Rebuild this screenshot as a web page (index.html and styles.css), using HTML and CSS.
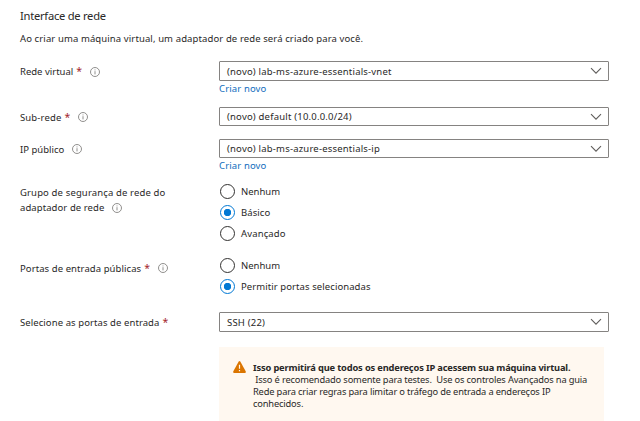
FILE: index.html
```html
<!DOCTYPE html>
<html lang="pt-BR">
<head>
<meta charset="utf-8">
<title>Interface de rede</title>
<link rel="stylesheet" href="styles.css">
</head>
<body>
<svg class="defs" aria-hidden="true">
  <symbol id="info" viewBox="0 0 10 10"><circle cx="5" cy="5" r="4.5" fill="none" stroke="#858381" stroke-width=".9"/><path d="M5 4.2V7.4M5 2.5V3.4" stroke="#858381" stroke-width=".9"/></symbol>
  <symbol id="chevron" viewBox="0 0 12 8"><path d="M1 1.2 6 6.2 11 1.2" fill="none" stroke="#605e5c" stroke-width="1.1"/></symbol>
</svg>
<main class="form">
  <h1 class="title">Interface de rede</h1>
  <p class="intro">Ao criar uma máquina virtual, um adaptador de rede será criado para você.</p>

  <div class="row row-vnet">
    <div class="label"><span>Rede virtual</span><b class="req">*</b><svg class="info"><use href="#info"/></svg></div>
    <div>
      <div class="select tall"><span>(novo) lab-ms-azure-essentials-vnet</span><svg class="chevron"><use href="#chevron"/></svg></div>
      <a class="link">Criar novo</a>
    </div>
  </div>

  <div class="row row-subnet">
    <div class="label"><span class="spaced">Sub-rede</span><b class="req">*</b><svg class="info"><use href="#info"/></svg></div>
    <div class="select"><span>(novo) default (10.0.0.0/24)</span><svg class="chevron"><use href="#chevron"/></svg></div>
  </div>

  <div class="row row-ip">
    <div class="label"><span>IP público</span><svg class="info"><use href="#info"/></svg></div>
    <div>
      <div class="select"><span>(novo) lab-ms-azure-essentials-ip</span><svg class="chevron"><use href="#chevron"/></svg></div>
      <a class="link">Criar novo</a>
    </div>
  </div>

  <div class="row row-nsg">
    <div class="label-lines">
      <div><span class="spaced">Grupo de segurança de rede do</span></div>
      <div class="line"><span class="snug">adaptador de rede</span><svg class="info"><use href="#info"/></svg></div>
    </div>
    <div>
      <div class="option"><i class="radio"></i><span>Nenhum</span></div>
      <div class="option"><i class="radio on"></i><span class="snug">Básico</span></div>
      <div class="option"><i class="radio"></i><span class="spaced">Avançado</span></div>
    </div>
  </div>

  <div class="row row-ports">
    <div class="label"><span class="snug">Portas de entrada públicas</span><b class="req">*</b><svg class="info"><use href="#info"/></svg></div>
    <div>
      <div class="option"><i class="radio"></i><span>Nenhum</span></div>
      <div class="option"><i class="radio on"></i><span class="snug">Permitir portas selecionadas</span></div>
    </div>
  </div>

  <div class="row row-select">
    <div class="label"><span class="snug">Selecione as portas de entrada</span><b class="req">*</b></div>
    <div class="select tall"><span>SSH (22)</span><svg class="chevron"><use href="#chevron"/></svg></div>
  </div>

  <div class="warning">
    <svg class="alert" viewBox="0 0 13 12"><path d="M5.7.6Q6.5-.5 7.3.6L12.8 10.6Q13 12 12 12H1Q0 12 .2 10.6Z" fill="#db7500"/><path d="M6.5 3.8V7.8M6.5 8.9V10.2" stroke="#fff8f0" stroke-width="1.2"/></svg>
    <div class="message">
      <div><strong>Isso permitirá que todos os endereços IP acessem sua máquina virtual.</strong></div>
      <div>&nbsp;Isso é recomendado somente para testes.&nbsp; Use os controles Avançados na guia</div>
      <div>Rede para criar regras para limitar o tráfego de entrada a endereços IP</div>
      <div>conhecidos.</div>
    </div>
  </div>
</main>
</body>
</html>
```
FILE: styles.css
```css
* { box-sizing: border-box; }
body {
  margin: 0;
  height: 421px;
  overflow: hidden;
  background: #fff;
  color: #292827;
  font: 9.5px/15px "Noto Sans", "Open Sans", sans-serif;
  white-space: nowrap;
}
svg { flex: none; }
.defs { display: block; width: 0; height: 0; }
.form { padding: 8px 0 0 20px; }
.title { margin: 0; height: 23px; font-size: 11.2px; line-height: 16px; font-weight: 400; letter-spacing: -.27px; }
.intro { margin: 0; height: 30px; letter-spacing: .11px; }
.row { display: grid; grid-template-columns: 199px 390px; align-items: start; }
.row-vnet { height: 46px; }
.row-subnet { height: 32px; }
.row-ip { height: 42px; }
.row-nsg { height: 74px; }
.row-ports { height: 57px; }
.row-select { height: 35px; }
.label { display: flex; align-items: center; height: 20px; }
.row-vnet .label { height: 21px; }
.line { display: flex; align-items: center; }
.label-lines { padding-top: 4px; }
.row-ports .label { height: 26px; }
.spaced { letter-spacing: .14px; }
.snug { letter-spacing: .08px; }
.req { margin-left: 3px; color: #a4262c; font-weight: 400; font-size: 10.5px; }
.info { width: 10px; height: 10px; margin-left: 7.5px; }
.select {
  display: flex;
  align-items: center;
  justify-content: space-between;
  height: 19px;
  padding: 0 6px 0 7px;
  border: 1px solid #858381;
  border-radius: 1px;
  letter-spacing: .2px;
}
.tall { height: 20px; }
.chevron { width: 12px; height: 8px; }
.link { display: block; line-height: 16px; color: #0f6cbd; letter-spacing: .13px; }
.option { display: flex; align-items: center; height: 21px; }
.radio { width: 15px; height: 15px; margin: 0 6px 0 1px; border: 1px solid #323130; border-radius: 50%; }
.on { border-color: #0078d4; background: radial-gradient(circle, #0078d4 3.4px, transparent 4px); }
.warning { display: flex; width: 385px; height: 74px; margin-left: 199px; padding: 14px 0 0 14px; background: #fff8f0; }
.alert { width: 13px; height: 12px; margin-right: 7px; }
.message { padding-top: 1px; font-size: 9.3px; line-height: 12px; letter-spacing: -.16px; }
```
